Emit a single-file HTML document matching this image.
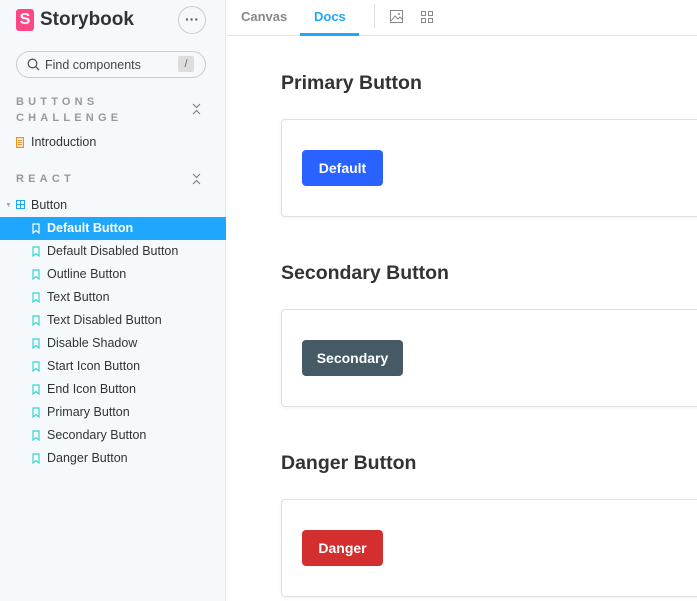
<!DOCTYPE html>
<html><head><style>
*{margin:0;padding:0;box-sizing:border-box}
body{width:697px;height:601px;overflow:hidden;font-family:"Liberation Sans",sans-serif;background:#fff;position:relative;color:#333}
#sb{position:absolute;left:0;top:0;width:226px;height:601px;background:#f6f9fc;border-right:1px solid #e6eaee}
.logo{position:absolute;left:16px;top:9px;width:18px;height:22px;background:#ff4785;border-radius:3px;color:#fff;font-weight:bold;font-size:16px;text-align:center;line-height:22px}
.title{position:absolute;left:40px;top:9px;font-size:19px;font-weight:bold;color:#333}
.more{position:absolute;left:178px;top:6px;width:28px;height:28px;border:1px solid #ccc;border-radius:50%;text-align:center;line-height:24px;font-size:14px;color:#555;font-weight:bold}
.search{position:absolute;left:16px;top:51px;width:190px;height:27px;border:1px solid #ccc;border-radius:14px;background:#f6f9fc}
.search span{position:absolute;left:28px;top:6px;font-size:12.5px;color:#444}
.slash{position:absolute;right:11px;top:4px;width:16px;height:16px;background:#ddd;border-radius:2px;font-size:11px;text-align:center;line-height:16px;color:#666}
.sec{position:absolute;left:16px;font-size:11px;font-weight:bold;letter-spacing:4.2px;color:#999;line-height:16px}
.item{position:absolute;left:0;width:226px;height:23px;font-size:12.5px;line-height:23px;color:#333}
.item svg{position:absolute;left:32px;top:6px}
.item span{position:absolute;left:47px}
.sel{background:#1ea7fd;color:#fff;font-weight:bold}
#top{position:absolute;left:227px;top:0;right:0;height:36px;border-bottom:1px solid #e3e3e3}
.tab{position:absolute;top:9px;font-size:13px;font-weight:bold}
h2{position:absolute;left:281px;font-size:19.5px;font-weight:bold;color:#333}
.box{position:absolute;left:281px;width:430px;height:98px;border:1px solid #e0e0e0;border-radius:4px;box-shadow:0 1px 3px rgba(0,0,0,.06)}
.btn{position:absolute;left:20px;top:30px;height:36px;border-radius:4px;color:#fff;font-size:14px;font-weight:bold;text-align:center;line-height:36px}
</style></head><body>
<div id="sb">
<div class="logo">S</div><div class="title">Storybook</div>
<div class="more">···</div>
<div class="search"><svg style="position:absolute;left:10px;top:6px" width="13" height="13" viewBox="0 0 13 13"><circle cx="5.5" cy="5.5" r="4.3" fill="none" stroke="#555" stroke-width="1.3"/><path d="M8.7 8.7L12 12" stroke="#555" stroke-width="1.3"/></svg><span>Find components</span><div class="slash">/</div></div>
<div class="sec" style="top:94px">BUTTONS<br>CHALLENGE</div>
<svg style="position:absolute;left:16px;top:137px" width="8" height="11"><rect x=".6" y=".6" width="6.8" height="9.8" fill="none" stroke="#f48f1e" stroke-width="1.2"/><path d="M2 3.5h4M2 5.5h4M2 7.5h4" stroke="#f48f1e"/></svg>
<div style="position:absolute;left:31px;top:135px;font-size:12.5px">Introduction</div>
<div class="sec" style="top:171px">REACT</div>
<svg style="position:absolute;left:192px;top:103px" width="9" height="12"><path d="M1 1l3.5 3.5L8 1M1 11l3.5-3.5L8 11" fill="none" stroke="#777"/></svg>
<svg style="position:absolute;left:192px;top:173px" width="9" height="12"><path d="M1 1l3.5 3.5L8 1M1 11l3.5-3.5L8 11" fill="none" stroke="#777"/></svg>
<div style="position:absolute;left:5px;top:202px;font-size:7px;color:#aaa">▼</div>
<svg style="position:absolute;left:16px;top:200px" width="9" height="9"><rect x=".5" y=".5" width="8" height="8" fill="none" stroke="#1ea7fd"/><path d="M4.5 0v9M0 4.5h9" stroke="#1ea7fd"/></svg>
<div style="position:absolute;left:31px;top:198px;font-size:12.5px">Button</div>
<div class="item sel" style="top:217px"><svg width="8" height="11"><path d="M1 1h6v9L4 7.5 1 10z" fill="none" stroke="#fff" stroke-width="1.2"/></svg><span>Default Button</span></div>
<div class="item" style="top:240px"><svg width="8" height="11"><path d="M1 1h6v9L4 7.5 1 10z" fill="none" stroke="#37d5d3" stroke-width="1.2"/></svg><span>Default Disabled Button</span></div>
<div class="item" style="top:263px"><svg width="8" height="11"><path d="M1 1h6v9L4 7.5 1 10z" fill="none" stroke="#37d5d3" stroke-width="1.2"/></svg><span>Outline Button</span></div>
<div class="item" style="top:286px"><svg width="8" height="11"><path d="M1 1h6v9L4 7.5 1 10z" fill="none" stroke="#37d5d3" stroke-width="1.2"/></svg><span>Text Button</span></div>
<div class="item" style="top:309px"><svg width="8" height="11"><path d="M1 1h6v9L4 7.5 1 10z" fill="none" stroke="#37d5d3" stroke-width="1.2"/></svg><span>Text Disabled Button</span></div>
<div class="item" style="top:332px"><svg width="8" height="11"><path d="M1 1h6v9L4 7.5 1 10z" fill="none" stroke="#37d5d3" stroke-width="1.2"/></svg><span>Disable Shadow</span></div>
<div class="item" style="top:355px"><svg width="8" height="11"><path d="M1 1h6v9L4 7.5 1 10z" fill="none" stroke="#37d5d3" stroke-width="1.2"/></svg><span>Start Icon Button</span></div>
<div class="item" style="top:378px"><svg width="8" height="11"><path d="M1 1h6v9L4 7.5 1 10z" fill="none" stroke="#37d5d3" stroke-width="1.2"/></svg><span>End Icon Button</span></div>
<div class="item" style="top:401px"><svg width="8" height="11"><path d="M1 1h6v9L4 7.5 1 10z" fill="none" stroke="#37d5d3" stroke-width="1.2"/></svg><span>Primary Button</span></div>
<div class="item" style="top:424px"><svg width="8" height="11"><path d="M1 1h6v9L4 7.5 1 10z" fill="none" stroke="#37d5d3" stroke-width="1.2"/></svg><span>Secondary Button</span></div>
<div class="item" style="top:447px"><svg width="8" height="11"><path d="M1 1h6v9L4 7.5 1 10z" fill="none" stroke="#37d5d3" stroke-width="1.2"/></svg><span>Danger Button</span></div>
</div>
<div id="top">
<div class="tab" style="left:14px;color:#888">Canvas</div>
<div class="tab" style="left:87px;color:#1ea7fd">Docs</div>
<div style="position:absolute;left:73px;top:33px;width:59px;height:3px;background:#1ea7fd"></div>
<div style="position:absolute;left:147px;top:4px;width:1px;height:24px;background:#ddd"></div>
<svg style="position:absolute;left:163px;top:10px" width="13" height="13"><rect x=".5" y=".5" width="12" height="12" fill="none" stroke="#888"/><path d="M1 11l4-5 3 3 2-2 3 3" fill="none" stroke="#888"/><circle cx="9" cy="4" r="1" fill="#888"/></svg>
<svg style="position:absolute;left:194px;top:11px" width="12" height="12" fill="none" stroke="#888"><rect x=".5" y=".5" width="4" height="4"/><rect x="7.5" y=".5" width="4" height="4"/><rect x=".5" y="7.5" width="4" height="4"/><rect x="7.5" y="7.5" width="4" height="4"/></svg>
</div>
<h2 style="top:72px">Primary Button</h2>
<div class="box" style="top:119px"><div class="btn" style="width:81px;background:#2962ff">Default</div></div>
<h2 style="top:262px">Secondary Button</h2>
<div class="box" style="top:309px"><div class="btn" style="width:101px;background:#455a64">Secondary</div></div>
<h2 style="top:452px">Danger Button</h2>
<div class="box" style="top:499px"><div class="btn" style="width:81px;background:#d32f2f">Danger</div></div>
</body></html>
